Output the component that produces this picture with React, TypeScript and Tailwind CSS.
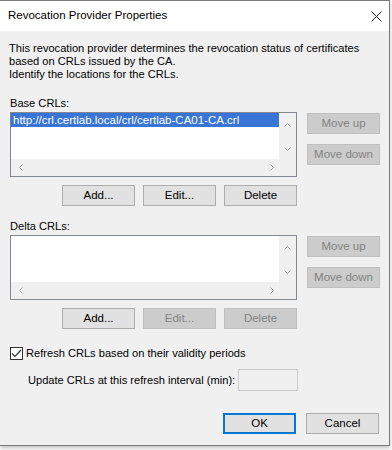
import type { ReactNode } from "react";

function Chevron({ dir }: { dir: "up" | "down" | "left" | "right" }) {
  const d = {
    up: "M0.5 4.5 L3.5 1.5 L6.5 4.5",
    down: "M0.5 1.5 L3.5 4.5 L6.5 1.5",
    left: "M4.5 0.5 L1.5 3.5 L4.5 6.5",
    right: "M1.5 0.5 L4.5 3.5 L1.5 6.5",
  }[dir];
  const vertical = dir === "up" || dir === "down";
  return (
    <svg
      width={vertical ? 7 : 6}
      height={vertical ? 6 : 7}
      viewBox={vertical ? "0 0 7 6" : "0 0 6 7"}
      fill="none"
      stroke="#a6a6a6"
      strokeWidth="1"
    >
      <path d={d} />
    </svg>
  );
}

function Btn({ children, disabled, primary }: { children: ReactNode; disabled?: boolean; primary?: boolean }) {
  let cls = "border-[#adadad] bg-[#e1e1e1] text-black";
  if (disabled) cls = "border-[#bfbfbf] bg-[#cccccc] text-[#838383]";
  if (primary) cls = "border-[#0078d7] border-2 bg-[#e1e1e1] text-black";
  return (
    <button
      type="button"
      className={`flex h-[21px] w-[73px] items-center justify-center border text-[11.5px] leading-[13px] ${cls}`}
    >
      {children}
    </button>
  );
}

function ListBox({ item }: { item?: string }) {
  return (
    <div className="flex h-[65px] w-[287px] flex-col border border-[#828790] bg-white">
      <div className="flex flex-1">
        <div className="flex-1 bg-white">
          {item && (
            <div className="h-[14px] bg-[#3875d7] pl-[2px] text-[11.5px] leading-[14px] text-white">{item}</div>
          )}
        </div>
        <div className="flex w-[17px] flex-col items-center justify-between bg-[#f0f0f0] pt-[9px] pb-[7px]">
          <Chevron dir="up" />
          <Chevron dir="down" />
        </div>
      </div>
      <div className="flex h-[17px] items-center bg-[#f0f0f0]">
        <div className="flex flex-1 items-center justify-between pl-[7px] pr-[4px]">
          <Chevron dir="left" />
          <Chevron dir="right" />
        </div>
        <div className="w-[17px]" />
      </div>
    </div>
  );
}

function CrlSection({ label, item, empty }: { label: string; item?: string; empty?: boolean }) {
  return (
    <div>
      <div className="h-[13px] leading-[13px]">{label}</div>
      <div className="mt-[2px] flex gap-[10px]">
        <ListBox item={item} />
        <div className="flex flex-col gap-[10px] pt-[1px]">
          <Btn disabled>Move up</Btn>
          <Btn disabled>Move down</Btn>
        </div>
      </div>
      <div className="mt-[8px] ml-[52px] flex gap-[8px]">
        <Btn>Add...</Btn>
        <Btn disabled={empty}>Edit...</Btn>
        <Btn disabled={empty}>Delete</Btn>
      </div>
    </div>
  );
}

export default function App() {
  return (
    <div className="h-[450px] w-[392px] bg-white font-['Liberation_Sans',Arial,sans-serif] text-[11.1px] text-black">
      <div className="flex h-[446px] w-[390px] flex-col border-t border-r border-b border-[#7a7a7a] shadow-[0_2px_4px_rgba(0,0,0,0.25)]">
        <div className="flex h-[30px] items-center justify-between bg-white pl-[8px] pr-[7px]">
          <span className="text-[11.5px]">Revocation Provider Properties</span>
          <svg width="11" height="11" viewBox="0 0 11 11" stroke="#222" strokeWidth="1" fill="none">
            <path d="M0.5 0.5 L10.5 10.5 M10.5 0.5 L0.5 10.5" />
          </svg>
        </div>
        <div className="flex-1 bg-[#f0f0f0] pt-[11px] pl-[9px] leading-[13px]">
          <p>
            This revocation provider determines the revocation status of certificates
            <br />
            based on CRLs issued by the CA.
            <br />
            Identify the locations for the CRLs.
          </p>

          <div className="mt-[16px] pl-[1px]">
            <CrlSection label="Base CRLs:" item="http://crl.certlab.local/crl/certlab-CA01-CA.crl" />
          </div>
          <div className="mt-[14px] pl-[1px]">
            <CrlSection label="Delta CRLs:" empty />
          </div>

          <div className="mt-[18px] flex items-center gap-[3px] pl-[1px]">
            <div className="flex h-[13px] w-[13px] items-center justify-center border border-[#333] bg-white">
              <svg width="11" height="9" viewBox="0 0 11 9" fill="none" stroke="#333" strokeWidth="1.2">
                <path d="M1 4.5 L4 7.5 L10 1" />
              </svg>
            </div>
            <span>Refresh CRLs based on their validity periods</span>
          </div>

          <div className="mt-[9px] flex items-center pl-[19px]">
            <span className="w-[210px] shrink-0 whitespace-nowrap">Update CRLs at this refresh interval (min):</span>
            <div className="h-[22px] w-[60px] border border-[#cccccc] bg-[#f0f0f0]" />
          </div>

          <div className="mt-[22px] flex justify-end gap-[10px] pr-[10px]">
            <Btn primary>OK</Btn>
            <Btn>Cancel</Btn>
          </div>
        </div>
      </div>
    </div>
  );
}
